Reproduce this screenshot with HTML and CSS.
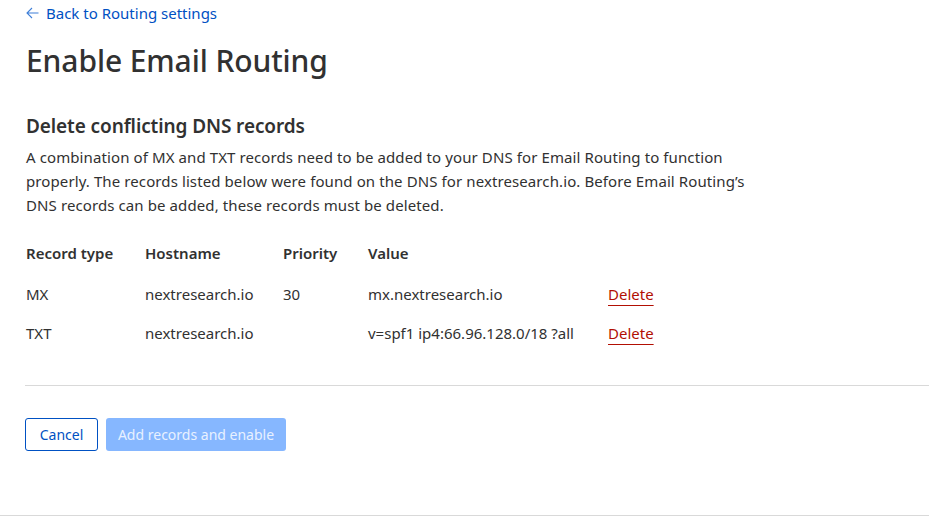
FILE: index.html
```html
<!DOCTYPE html>
<html>
<head>
<meta charset="utf-8">
<link rel="stylesheet" href="styles.css">
</head>
<body>
<div class="page">
  <div class="content">
    <a class="back" href="#"><svg class="arrow" width="13" height="12" viewBox="0 0 13 12"><path d="M6 1 L1 6 L6 11 M1 6 H12.5" fill="none" stroke="currentColor" stroke-width="1.1"/></svg>Back to Routing settings</a>
    <h1 class="title">Enable Email Routing</h1>
    <h2 class="subtitle">Delete conflicting DNS records</h2>
    <p class="desc">A combination of MX and TXT records need to be added to your DNS for Email Routing to function properly. The records listed below were found on the DNS for nextresearch.io. Before Email Routing’s DNS records can be added, these records must be deleted.</p>
    <div class="table">
      <div class="row head">
        <div class="c1">Record type</div><div class="c2">Hostname</div><div class="c3">Priority</div><div class="c4">Value</div><div class="c5"></div>
      </div>
      <div class="row">
        <div class="c1">MX</div><div class="c2">nextresearch.io</div><div class="c3">30</div><div class="c4">mx.nextresearch.io</div><div class="c5"><a class="del" href="#">Delete</a></div>
      </div>
      <div class="row">
        <div class="c1">TXT</div><div class="c2">nextresearch.io</div><div class="c3"></div><div class="c4">v=spf1 ip4:66.96.128.0/18 ?all</div><div class="c5"><a class="del" href="#">Delete</a></div>
      </div>
    </div>
  </div>
  <hr class="divider">
  <div class="actions">
    <button class="btn cancel">Cancel</button>
    <button class="btn primary" disabled>Add records and enable</button>
  </div>
</div>
<div class="bottom"></div>
</body>
</html>
```
FILE: styles.css
```css
html, body { margin: 0; padding: 0; background: #fff; }
body { font-family: "Noto Sans", "Open Sans", sans-serif; color: #313131; width: 929px; height: 518px; overflow: hidden; position: relative; }
.page { padding-left: 25px; }
.content { padding-left: 1px; }
.back { display: flex; align-items: center; gap: 7px; color: #0051c3; text-decoration: none; font-size: 15px; line-height: 20px; padding-top: 3px; }
.arrow { display: block; color: #3f7fd8; }
.title { font-size: 30px; font-weight: 500; margin: 18px 0 0; line-height: 40px; color: #313131; letter-spacing: -0.1px; }
.subtitle { font-size: 19px; font-weight: 600; margin: 32px 0 0; line-height: 26px; letter-spacing: -0.1px; }
.desc { font-size: 15px; line-height: 24px; margin: 6px 0 0; width: 740px; letter-spacing: 0.1px; }
.table { margin-top: 18px; font-size: 15px; }
.row { display: flex; height: 39px; align-items: center; }
.row.head { font-weight: 600; height: 36px; margin-bottom: 3px; }
.c1 { width: 119px; }
.c2 { width: 138px; }
.c3 { width: 85px; }
.c4 { width: 240px; }
.del { color: #b20f03; text-decoration: underline; text-underline-offset: 5px; }
.divider { border: 0; border-top: 1px solid #d9d9d9; margin: 33px 0 0; }
.actions { display: flex; gap: 8px; margin-top: 32px; }
.btn { font-family: inherit; font-size: 14px; height: 33px; border-radius: 3px; padding: 0; white-space: nowrap; }
.cancel { background: #fff; color: #0051c3; border: 1px solid #0051c3; width: 73px; }
.primary { background: #86b7ff; color: #e8f1ff; border: 0; width: 180px; }
.bottom { position: absolute; left: 0; right: 0; bottom: 2px; border-top: 1px solid #d9d9d9; }
```
